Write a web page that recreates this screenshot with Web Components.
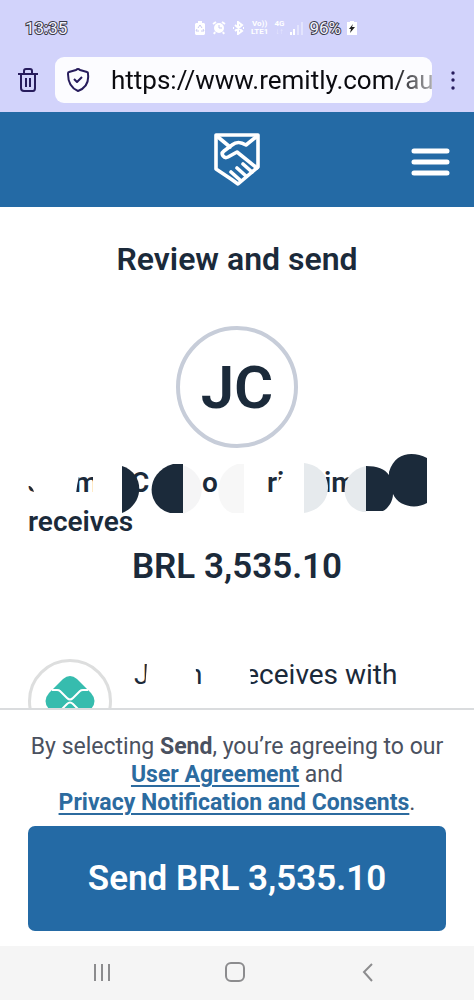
<!DOCTYPE html>
<html lang="en">
<head>
<meta charset="utf-8">
<meta name="viewport" content="width=device-width, initial-scale=1">
<title>Review and send</title>
<style>
html, body { margin: 0; height: 100%; }
body { font-family: Roboto, "Open Sans", sans-serif; color: #1b2a3a; background: #fff; }
</style>
</head>
<body>
<phone-screen>
  <status-bar slot="top"></status-bar>
  <browser-bar slot="top" url="https://www.remitly.com/au"></browser-bar>
  <site-header slot="top"></site-header>
  <review-summary></review-summary>
  <send-footer slot="bottom" amount="BRL 3,535.10"></send-footer>
  <system-nav slot="bottom"></system-nav>
</phone-screen>
<script>
function define(name, html) {
  const template = document.createElement('template');
  template.innerHTML = '<style>:host,*{box-sizing:border-box}svg{display:block;flex:none}</style>' + html;
  customElements.define(name, class extends HTMLElement {
    constructor() {
      super();
      this.attachShadow({ mode: 'open' }).append(template.content.cloneNode(true));
    }
    connectedCallback() {
      const url = this.shadowRoot.querySelector('#url');
      if (url) url.value = this.getAttribute('url');
      const amount = this.shadowRoot.querySelector('#amount');
      if (amount) amount.textContent = this.getAttribute('amount');
    }
  });
}

define('phone-screen', `
<style>
:host { display: flex; flex-direction: column; height: 100vh; overflow: hidden; }
main { flex: 1; min-height: 0; overflow: hidden; }
</style>
<slot name="top"></slot><main><slot></slot></main><slot name="bottom"></slot>`);

define('status-bar', `
<style>
:host { display: flex; align-items: center; justify-content: space-between; height: 56px; padding: 0 117px 0 25px; background: #d2d3fb; color: #fff; }
.outlined { font-size: 17px; line-height: 20px; color: #f4f4ff; -webkit-text-stroke: 2px #3a3a48; paint-order: stroke fill; }
.icons { display: flex; align-items: center; gap: 6px; }
.net { font-size: 8px; line-height: 8px; font-weight: 700; text-align: center; }
.dim { opacity: .45; }
</style>
<span class="outlined">13:35</span>
<div class="icons">
<svg width="12" height="14" viewBox="0 0 12 14"><path d="M4 0h4v2h2l1 1v10l-1 1H2l-1-1V3l1-1h2z" fill="#fff"/><path d="M4 7l2-3 2 3M9 8l1 2H7M5 10H2l1-2" fill="none" stroke="#c9caf3"/></svg>
<svg width="14" height="14" viewBox="0 0 14 14"><circle cx="7" cy="7" r="5" fill="#fff"/><path d="M1 3l3-2M13 3l-3-2M3 11l-1 2M11 11l1 2" stroke="#fff" stroke-width="2"/><path d="M7 4v3h3" fill="none" stroke="#c9caf3"/></svg>
<svg width="13" height="14" viewBox="0 0 13 14"><path d="M3 4l7 6-4 3V1l4 3-7 6M1 7h1M11 7h1" fill="none" stroke="#fff" stroke-width="2"/></svg>
<div class="net">Vo))<br>LTE1</div>
<div class="net">4G<br><span class="dim">↓↑</span></div>
<svg width="13" height="14" viewBox="0 0 13 14"><path d="M1 11v3M4 8v6" stroke="#fff" stroke-width="2"/><path d="M8 4v10M12 1v13" stroke="#e3e4fd" stroke-width="2"/></svg>
<span class="outlined">96%</span>
<svg width="10" height="14" viewBox="0 0 10 14"><path d="M3 0h4v1h3v13H0V1h3z" fill="#fff"/><path d="M6 3L2 8h2l-1 4 5-6H5z" fill="#222"/></svg>
</div>`);

define('browser-bar', `
<style>
:host { display: flex; align-items: center; height: 56px; padding: 0 19px 8px 18px; background: #d2d3fb; }
button { border: 0; padding: 0; background: none; }
label { flex: 1; min-width: 0; display: flex; align-items: center; gap: 21px; height: 46px; margin: 0 19px 0 17px; padding-left: 12px; border-radius: 9px; background: #fcfcff; overflow: hidden; }
input { flex: 1; min-width: 0; height: 36px; border: 0; padding: 0; outline: 0; background: none; font: 26px/36px Roboto, sans-serif; color: #0b0b10; -webkit-mask-image: linear-gradient(to right, #000 calc(100% - 40px), #0005); mask-image: linear-gradient(to right, #000 calc(100% - 40px), #0005); }
</style>
<button aria-label="Close tab"><svg width="20" height="24" viewBox="0 0 20 24" fill="none" stroke="#271c5c" stroke-width="2"><path d="M0 6h20M6 6V3q0-2 2-2h4q2 0 2 2v3M3 6v14q0 3 3 3h9q2 0 2-3V6M8 10v9M12 10v9"/></svg></button>
<label aria-label="Address"><svg width="23" height="24" viewBox="0 0 23 24" fill="none" stroke="#271c5c" stroke-width="2" stroke-linejoin="round"><path d="M11 1q1 0 2 1l7 2q1 0 1 2c1 8-2 14-10 17C4 20 1 14 1 6q0-2 1-2l7-2q1-1 2-1z"/><path d="M7 11l3 3 5-5"/></svg><input id="url" type="text" readonly></label>
<button aria-label="Menu"><svg width="4" height="20" viewBox="0 0 4 20" fill="#271c5c"><circle cx="2" cy="3" r="1.7"/><circle cx="2" cy="10" r="1.7"/><circle cx="2" cy="18" r="1.7"/></svg></button>`);

define('site-header', `
<style>
:host { display: grid; grid-template-columns: 1fr auto 1fr; align-items: center; height: 95px; padding: 0 24px; background: #246aa5; }
a { grid-column: 2; }
button { justify-self: end; border: 0; padding: 4px 0 0; background: none; }
</style>
<a href="#" aria-label="Home"><svg width="46" height="54" viewBox="0 0 46 54" fill="none" stroke="#fff" stroke-width="3.6" stroke-linejoin="round" stroke-linecap="round"><path d="M17 46L2 36V2h42v32L24 51l-7-5"/><path d="M4 4l12 10M42 4L32 12C27 9 23 8 18 12L10 18c-4 3 0 8 4 6l9-5 20 16M29 31l9 8M23 35l9 8M17 39l9 8"/></svg></a>
<button aria-label="Open menu"><svg width="40" height="28" viewBox="0 0 40 28" stroke="#fff" stroke-width="5" stroke-linecap="round"><path d="M4 3h33M4 14h33M4 25h33"/></svg></button>`);

define('review-summary', `
<style>
:host { display: flex; flex-direction: column; padding: 32px 28px 0; }
h1, h2, p { margin: 0; font-weight: 600; }
h1 { font-size: 32px; line-height: 40px; text-align: center; }
.avatar { align-self: center; display: grid; place-items: center; width: 122px; height: 122px; margin-top: 47px; border: 4px solid #c7cdd9; border-radius: 50%; font-size: 60px; font-weight: 600; }
.who { position: relative; margin-top: 15px; font-size: 28px; line-height: 39px; font-weight: 600; }
.parts { display: grid; grid-template-columns: 46px 57px 71px 65px 57px 1fr; }
.marks { position: absolute; left: -6px; top: -14px; }
.sum { font-size: 35px; line-height: 52px; text-align: center; }
.method { display: flex; gap: 22px; margin-top: 66px; }
.pix { display: grid; place-items: center; flex: none; width: 84px; height: 84px; border: 3px solid #dddede; border-radius: 50%; }
.line { position: relative; flex: 1; display: grid; grid-template-columns: 53px 48px 1fr; height: 36px; font-size: 28px; line-height: 32px; white-space: nowrap; }
.line svg { position: absolute; left: 0; top: 0; }
</style>
<h1>Review and send</h1>
<div class="avatar">JC</div>
<div class="who">
  <div class="parts"><span>J</span><span>m</span><span>C</span><span>o</span><span>ri</span><span>im</span></div>
  <p>receives</p>
  <svg class="marks" width="412" height="66" viewBox="22 449 412 66">
    <g fill="#fff"><path d="M22 462h34v36H34v-6q-1-5-6-7h-6z"/><path d="M56 460h28q-6 15-8 34H56z"/><path d="M80 460h24v16h-24z"/><path d="M93 476h11v18h-11z"/></g>
    <path d="M122 466c23 7 23 38 0 47z" fill="#1b2a3a"/>
    <path d="M183 464h-10c-28 8-28 42-3 49h13z" fill="#1b2a3a"/>
    <path d="M183 465c25 9 25 40 0 49z" fill="#f5f5f6"/>
    <path d="M244 464h-7c-24 8-24 42-5 49h12z" fill="#f7f7f7"/>
    <circle cx="292" cy="488" r="15" fill="#fff"/>
    <path d="M304 463c32 4 32 45 0 50z" fill="#e6eaed"/>
    <path d="M366 466c-28 6-28 41-3 46h3z" fill="#e6eaed"/>
    <path d="M366 466c11 0 19 3 23 9v-3c6-20 24-21 38-14v45c-12 7-29 3-34-9 0 9-7 16-10 17h-17z" fill="#1b2a3a"/>
  </svg>
</div>
<h2 class="sum">BRL 3,535.10</h2>
<div class="method">
  <div class="pix"><svg width="50" height="50" viewBox="0 0 50 50"><path d="M18 3q7-6 14 0l14 14q7 8 0 16L32 47q-7 6-14 0L4 33q-7-8 0-16z" fill="#36bcae"/><path d="M7 14h5q2 0 3 1l7 7q3 3 6 0l7-7q1-1 3-1h5M7 38h5l10-10q3-3 6 0l10 10h5" fill="none" stroke="#fff" stroke-width="2"/></svg></div>
  <div class="line"><span>J</span><span>n</span><span>receives with</span>
    <svg width="264" height="36" viewBox="134 659 264 36" fill="#fff"><path d="M147 662h42v28h-44z"/><path d="M187 662h8l3 28h-11z"/><path d="M202 662h44q7 8 4 28h-48z"/></svg>
  </div>
</div>`);

define('send-footer', `
<style>
:host { display: block; padding: 23px 28px 15px; border-top: 2px solid #dadcde; background: #fff; }
p { margin: 0 -10px 9px; font-size: 23px; line-height: 28px; text-align: center; color: #4a5160; }
b, a { font-weight: 700; }
a { color: #2c6b9f; text-decoration-thickness: 2px; text-underline-offset: 3px; }
button { display: block; width: 100%; height: 105px; padding: 0; border: 0; border-radius: 7px; background: #246aa5; color: #fff; font: 600 35px/44px Roboto, sans-serif; }
</style>
<p>By selecting <b>Send</b>, you’re agreeing to our<br><a href="#">User Agreement</a> and<br><a href="#">Privacy Notification and Consents</a>.</p>
<button>Send <span id="amount"></span></button>`);

define('system-nav', `
<style>
:host { display: grid; grid-template-columns: repeat(3, 133px); justify-content: center; justify-items: center; align-items: center; height: 54px; padding: 0 4px 2px 0; background: #f5f5f5; }
button { border: 0; padding: 0; background: none; }
svg { fill: none; stroke: #8c8c8e; stroke-width: 2; }
</style>
<button aria-label="Recent apps"><svg width="20" height="20" viewBox="0 0 20 20"><path d="M3 2v17M10 2v17M17 2v17"/></svg></button>
<button aria-label="Home"><svg width="20" height="20" viewBox="0 0 20 20"><rect x="1" y="1" width="18" height="18" rx="5"/></svg></button>
<button aria-label="Back"><svg width="20" height="20" viewBox="0 0 20 20"><path d="M14 2L6 10l8 9"/></svg></button>`);
</script>
</body>
</html>
